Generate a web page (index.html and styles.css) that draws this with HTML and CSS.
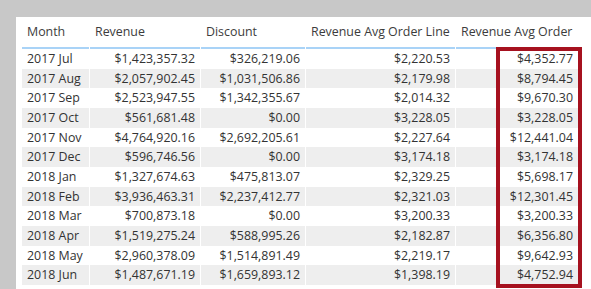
FILE: index.html
```html
<!DOCTYPE html>
<html>
<head>
<meta charset="utf-8">
<link rel="stylesheet" href="styles.css">
</head>
<body>
<div class="panel">
  <table class="grid">
    <colgroup>
      <col class="c1"><col class="c2"><col class="c3"><col class="c4"><col class="c5">
    </colgroup>
    <thead>
      <tr><th class="l">Month</th><th class="l">Revenue</th><th class="l">Discount</th><th class="l">Revenue Avg Order Line</th><th class="l">Revenue Avg Order</th></tr>
    </thead>
    <tbody>
      <tr><td class="l">2017 Jul</td><td>$1,423,357.32</td><td>$326,219.06</td><td>$2,220.53</td><td>$4,352.77</td></tr>
      <tr><td class="l">2017 Aug</td><td>$2,057,902.45</td><td>$1,031,506.86</td><td>$2,179.98</td><td>$8,794.45</td></tr>
      <tr><td class="l">2017 Sep</td><td>$2,523,947.55</td><td>$1,342,355.67</td><td>$2,014.32</td><td>$9,670.30</td></tr>
      <tr><td class="l">2017 Oct</td><td>$561,681.48</td><td>$0.00</td><td>$3,228.05</td><td>$3,228.05</td></tr>
      <tr><td class="l">2017 Nov</td><td>$4,764,920.16</td><td>$2,692,205.61</td><td>$2,227.64</td><td>$12,441.04</td></tr>
      <tr><td class="l">2017 Dec</td><td>$596,746.56</td><td>$0.00</td><td>$3,174.18</td><td>$3,174.18</td></tr>
      <tr><td class="l">2018 Jan</td><td>$1,327,674.63</td><td>$475,813.07</td><td>$2,329.25</td><td>$5,698.17</td></tr>
      <tr><td class="l">2018 Feb</td><td>$3,936,463.31</td><td>$2,237,412.77</td><td>$2,321.03</td><td>$12,301.45</td></tr>
      <tr><td class="l">2018 Mar</td><td>$700,873.18</td><td>$0.00</td><td>$3,200.33</td><td>$3,200.33</td></tr>
      <tr><td class="l">2018 Apr</td><td>$1,519,275.24</td><td>$588,995.26</td><td>$2,182.87</td><td>$6,356.80</td></tr>
      <tr><td class="l">2018 May</td><td>$2,960,378.09</td><td>$1,514,891.49</td><td>$2,219.17</td><td>$9,642.93</td></tr>
      <tr><td class="l">2018 Jun</td><td>$1,487,671.19</td><td>$1,659,893.12</td><td>$1,398.19</td><td>$4,752.94</td></tr>
    </tbody>
  </table>
  <div class="highlight"></div>
</div>
</body>
</html>
```

FILE: styles.css
```css
html, body {
  margin: 0;
  padding: 0;
  background: #c8c8c8;
  height: 100%;
  overflow: hidden;
}
body {
  padding: 17px 0 0 16px;
  box-sizing: border-box;
  font-family: "Open Sans", "Liberation Sans", sans-serif;
  font-size: 12.4px;
  color: #333333;
}
.panel {
  position: relative;
  background: #ffffff;
  height: 100%;
  padding-left: 5px;
  overflow: hidden;
}
.grid {
  border-collapse: separate;
  border-spacing: 1px 0;
  table-layout: fixed;
  width: 558px;
}
.c1 { width: 67px; }
.c2 { width: 110px; }
.c3 { width: 104px; }
.c4 { width: 149px; }
.c5 { width: 122px; }
th {
  font-weight: normal;
  color: #3c3c3c;
  text-align: left;
  padding: 7px 4px 8px 5px;
  line-height: 15px;
  border-bottom: 2px solid #a9d3f7;
  white-space: nowrap;
}
td {
  padding: 0 5px 0 5px;
  height: 19.67px;
  line-height: 19.67px;
  text-align: right;
  white-space: nowrap;
}
td.l { text-align: left; }
tbody tr:nth-child(even) td { background: #eeeeee; }
.highlight {
  position: absolute;
  left: 480px;
  top: 30px;
  width: 78px;
  height: 233px;
  border: 4px solid #a6111f;
}
```
